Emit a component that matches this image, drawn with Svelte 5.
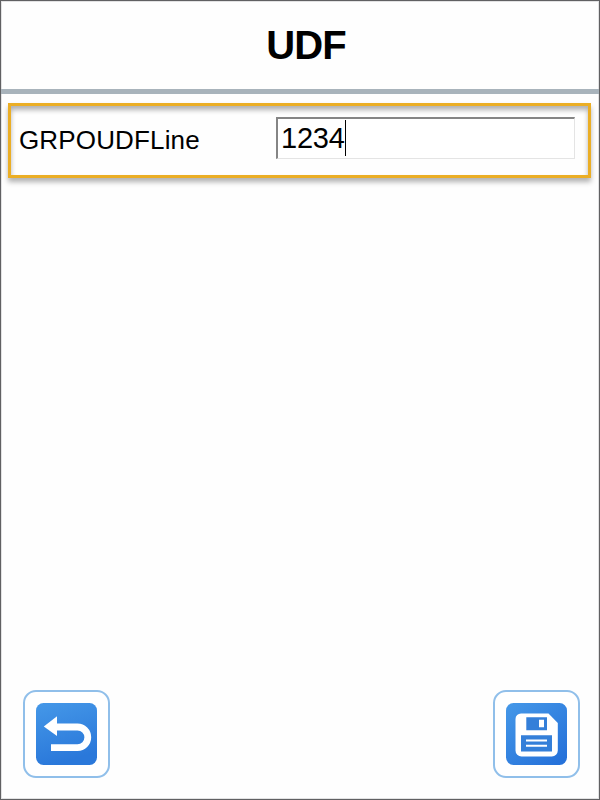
<script>
  let value = $state('1234');
</script>

<div class="screen">
  <header><h1>UDF</h1></header>
  <main>
    <div class="row">
      <span class="label">GRPOUDFLine</span>
      <div class="field"><span>{value}</span><i class="caret"></i></div>
    </div>
  </main>
  <footer>
    <button aria-label="Back">
      <svg width="61" height="62" viewBox="0 0 61 62">
        <defs>
          <linearGradient id="back" x1="0" y1="0" x2="0.3" y2="1">
            <stop offset="0" stop-color="#4598e8" />
            <stop offset="1" stop-color="#2a78da" />
          </linearGradient>
        </defs>
        <rect width="61" height="62" rx="7.5" fill="url(#back)" />
        <path d="M19 24H41.5A10.3 10.3 0 0 1 41.5 44.6H15" fill="none" stroke="#fff" stroke-width="6.8" />
        <path d="M7.8 23.4L21 13.3V33Z" fill="#fff" />
      </svg>
    </button>
    <button aria-label="Save">
      <svg width="61" height="62" viewBox="0 0 61 62">
        <defs>
          <linearGradient id="save" x1="0" y1="0" x2="0.8" y2="1">
            <stop offset="0" stop-color="#4598e8" />
            <stop offset="1" stop-color="#2672da" />
          </linearGradient>
        </defs>
        <rect width="61" height="62" rx="7.5" fill="url(#save)" />
        <path d="M15 10.5H42.5L51.8 20V47.5A6 6 0 0 1 45.8 53.5H15.5A6 6 0 0 1 9.5 47.5V16A5.5 5.5 0 0 1 15 10.5Z" fill="#fff" />
        <path d="M20.3 14.3H41V27.3H20.3ZM15 32.3H46V48.5H15Z" fill="#347fd9" />
        <path d="M33 16.8H38V24.3H33ZM20 36.5H41V38.5H20ZM20 41.8H41V43.8H20Z" fill="#fff" />
      </svg>
    </button>
  </footer>
</div>

<style>
  :global(body) {
    margin: 0;
  }
  .screen {
    box-sizing: border-box;
    width: 600px;
    height: 800px;
    border: 1px solid #606062;
    background: #fefefe;
    box-shadow: inset 0 0 0 1px #e2e2e3;
    display: flex;
    flex-direction: column;
    font-family: 'Liberation Sans', Arial, sans-serif;
    color: #000;
  }
  header {
    height: 88px;
    border-bottom: 5px solid #a8b3bb;
    display: flex;
    align-items: center;
    justify-content: center;
    padding-left: 12px;
  }
  h1 {
    margin: 0;
    font-size: 40px;
    line-height: 46px;
    font-weight: 700;
    letter-spacing: -0.9px;
  }
  main {
    flex: 1;
    padding: 9px 8px 0 7px;
  }
  .row {
    box-sizing: border-box;
    height: 75px;
    border: 3px solid #ebae25;
    box-shadow:
      0 4px 5px rgba(0, 0, 0, 0.3),
      inset 0 4px 5px rgba(0, 0, 0, 0.3);
    display: flex;
    align-items: flex-start;
    padding: 11px 13px 0 8px;
  }
  .label {
    width: 257px;
    flex: none;
    font-size: 26px;
    line-height: 46px;
    letter-spacing: 0.15px;
  }
  .field {
    box-sizing: border-box;
    flex: 1;
    height: 42px;
    border: 1px solid #e4e4e4;
    border-top: 2px solid #858585;
    border-left: 2px solid #858585;
    background: #fff;
    display: flex;
    padding: 0 0 0 3px;
    font-size: 29px;
    line-height: 39px;
    letter-spacing: -0.2px;
  }
  .caret {
    width: 1px;
    height: 36px;
    margin-top: 1px;
    background: #000;
  }
  footer {
    display: flex;
    justify-content: space-between;
    padding: 0 19px 21px 22px;
  }
  button {
    box-sizing: border-box;
    width: 87px;
    height: 88px;
    padding: 0;
    border: 2px solid #90bfea;
    border-radius: 13px;
    background: #fff;
    display: flex;
    align-items: center;
    justify-content: center;
  }
  svg {
    display: block;
  }
</style>
